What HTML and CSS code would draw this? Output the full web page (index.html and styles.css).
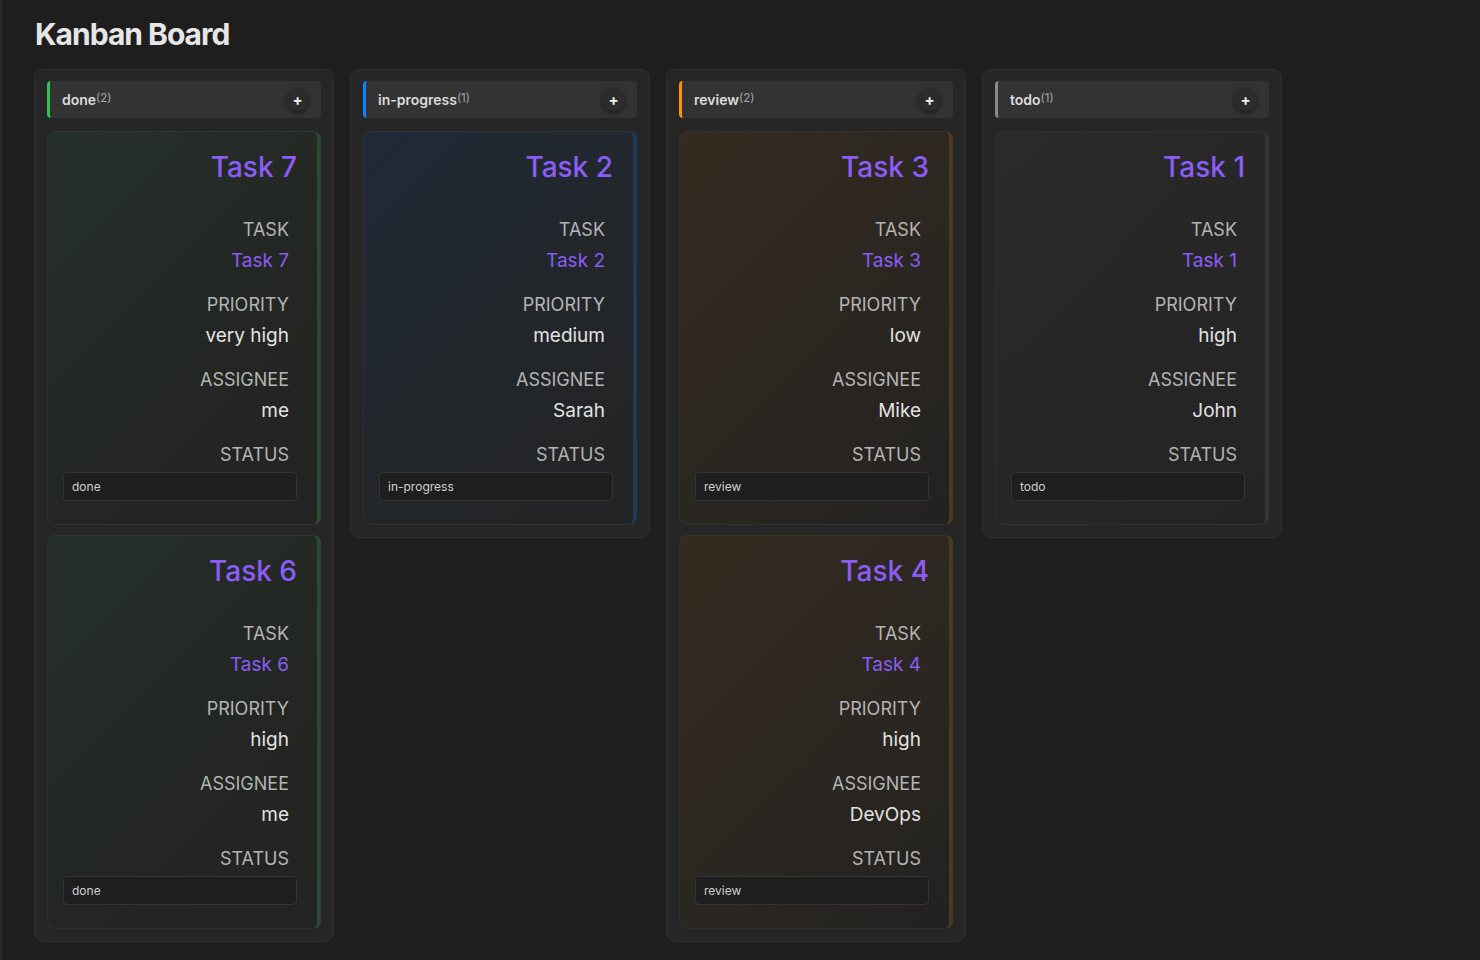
FILE: index.html
```html
<!DOCTYPE html>
<html lang="en">
<head>
<meta charset="utf-8">
<title>Kanban Board</title>
<link rel="stylesheet" href="styles.css">
</head>
<body>
<div class="app">
  <h1 class="title">Kanban Board</h1>
  <div class="board">
    <section class="column col-done">
      <header class="col-head"><span class="col-name">done</span><span class="col-count">(2)</span><span class="add">+</span></header>
      <article class="card">
        <h2 class="card-title">Task 7</h2>
        <div class="fields">
          <div class="field"><div class="label">TASK</div><div class="value accent">Task 7</div></div>
          <div class="field"><div class="label">PRIORITY</div><div class="value">very high</div></div>
          <div class="field"><div class="label">ASSIGNEE</div><div class="value">me</div></div>
          <div class="field last"><div class="label">STATUS</div></div>
        </div>
        <div class="status">done</div>
      </article>
      <article class="card">
        <h2 class="card-title">Task 6</h2>
        <div class="fields">
          <div class="field"><div class="label">TASK</div><div class="value accent">Task 6</div></div>
          <div class="field"><div class="label">PRIORITY</div><div class="value">high</div></div>
          <div class="field"><div class="label">ASSIGNEE</div><div class="value">me</div></div>
          <div class="field last"><div class="label">STATUS</div></div>
        </div>
        <div class="status">done</div>
      </article>
    </section>
    <section class="column col-progress">
      <header class="col-head"><span class="col-name">in-progress</span><span class="col-count">(1)</span><span class="add">+</span></header>
      <article class="card">
        <h2 class="card-title">Task 2</h2>
        <div class="fields">
          <div class="field"><div class="label">TASK</div><div class="value accent">Task 2</div></div>
          <div class="field"><div class="label">PRIORITY</div><div class="value">medium</div></div>
          <div class="field"><div class="label">ASSIGNEE</div><div class="value">Sarah</div></div>
          <div class="field last"><div class="label">STATUS</div></div>
        </div>
        <div class="status">in-progress</div>
      </article>
    </section>
    <section class="column col-review">
      <header class="col-head"><span class="col-name">review</span><span class="col-count">(2)</span><span class="add">+</span></header>
      <article class="card">
        <h2 class="card-title">Task 3</h2>
        <div class="fields">
          <div class="field"><div class="label">TASK</div><div class="value accent">Task 3</div></div>
          <div class="field"><div class="label">PRIORITY</div><div class="value">low</div></div>
          <div class="field"><div class="label">ASSIGNEE</div><div class="value">Mike</div></div>
          <div class="field last"><div class="label">STATUS</div></div>
        </div>
        <div class="status">review</div>
      </article>
      <article class="card">
        <h2 class="card-title">Task 4</h2>
        <div class="fields">
          <div class="field"><div class="label">TASK</div><div class="value accent">Task 4</div></div>
          <div class="field"><div class="label">PRIORITY</div><div class="value">high</div></div>
          <div class="field"><div class="label">ASSIGNEE</div><div class="value">DevOps</div></div>
          <div class="field last"><div class="label">STATUS</div></div>
        </div>
        <div class="status">review</div>
      </article>
    </section>
    <section class="column col-todo">
      <header class="col-head"><span class="col-name">todo</span><span class="col-count">(1)</span><span class="add">+</span></header>
      <article class="card">
        <h2 class="card-title">Task 1</h2>
        <div class="fields">
          <div class="field"><div class="label">TASK</div><div class="value accent">Task 1</div></div>
          <div class="field"><div class="label">PRIORITY</div><div class="value">high</div></div>
          <div class="field"><div class="label">ASSIGNEE</div><div class="value">John</div></div>
          <div class="field last"><div class="label">STATUS</div></div>
        </div>
        <div class="status">todo</div>
      </article>
    </section>
  </div>
</div>
</body>
</html>
```
FILE: styles.css
```css
* { box-sizing: border-box; }
html, body { margin: 0; padding: 0; }
body {
  background: #1e1e1e;
  font-family: Inter, "Noto Sans", "Liberation Sans", sans-serif;
  color: #e0e0e0;
}
.app {
  min-height: 960px;
  border-left: 2px solid #2a2a2a;
  padding: 16px 32px;
}
.title {
  margin: 0 0 17px 1px;
  font-size: 30px;
  font-weight: 700;
  letter-spacing: -1px;
  color: #e6e6e6;
  line-height: normal;
}
.board {
  display: flex;
  align-items: flex-start;
  gap: 16px;
}
.column {
  width: 300px;
  background: #262626;
  border: 1px solid #2f2f2f;
  border-radius: 8px;
  padding: 11px 12px 12px;
  display: flex;
  flex-direction: column;
  gap: 10px;
}
.col-head {
  height: 37px;
  background: #333333;
  border-radius: 4px;
  border-left: 3px solid #888;
  display: flex;
  align-items: center;
  padding: 0 12px 0 12px;
  margin-bottom: 3px;
}
.col-done .col-head { border-left-color: #30c452; }
.col-progress .col-head { border-left-color: #0a84ff; }
.col-review .col-head { border-left-color: #ff9500; }
.col-todo .col-head { border-left-color: #8a8a8a; }
.col-name {
  font-size: 14px;
  font-weight: 600;
  color: #dcdcdc;
}
.col-count {
  font-size: 11.5px;
  color: #a8a8a8;
  position: relative;
  top: -2px;
}
.add {
  margin-left: auto;
  width: 23px;
  height: 23px;
  border-radius: 50%;
  background: #2c2c2c;
  box-shadow: 0 2px 4px rgba(0,0,0,0.45);
  color: #f2f2f2;
  font-size: 15px;
  font-weight: 700;
  display: flex;
  align-items: center;
  justify-content: center;
  line-height: 1;
}
.card {
  height: 394px;
  border: 1px solid #303030;
  border-right: 4px solid #3a3a3a;
  border-radius: 8px;
  padding: 18px 20px 0 15px;
  background: linear-gradient(135deg, #2a2a2a 0%, #242424 100%);
}
.col-done .card {
  background: linear-gradient(135deg, #26302a 0%, #232623 60%, #222322 100%);
  border-right-color: #2b4a31;
  border-top-color: #2e3a31;
}
.col-progress .card {
  background: linear-gradient(135deg, #1f2a37 0%, #232629 60%, #222324 100%);
  border-right-color: #203a5a;
  border-top-color: #2b3440;
}
.col-review .card {
  background: linear-gradient(135deg, #352b20 0%, #2a2621 60%, #232221 100%);
  border-right-color: #4a3a22;
  border-top-color: #3a3226;
}
.col-todo .card {
  background: linear-gradient(135deg, #2a2a2a 0%, #262626 60%, #242424 100%);
  border-right-color: #353535;
}
.card-title {
  margin: 0 0 30px;
  text-align: right;
  font-size: 28px;
  font-weight: 500;
  color: #8b5cf6;
  line-height: 34px;
}
.fields {
  padding-right: 8px;
  text-align: right;
}
.field { margin-bottom: 13px; }
.field.last { margin-bottom: 2px; }
.label {
  font-size: 18px;
  line-height: 31px;
  color: #b4b4b4;
}
.value {
  font-size: 19px;
  line-height: 31px;
  color: #e2e2e2;
}
.value.accent { color: #8b5cf6; }
.status {
  height: 29px;
  background: #1e1e1e;
  border: 1px solid #343434;
  border-radius: 4px;
  padding: 0 8px;
  font-size: 12px;
  line-height: 27px;
  color: #d0d0d0;
}
```
